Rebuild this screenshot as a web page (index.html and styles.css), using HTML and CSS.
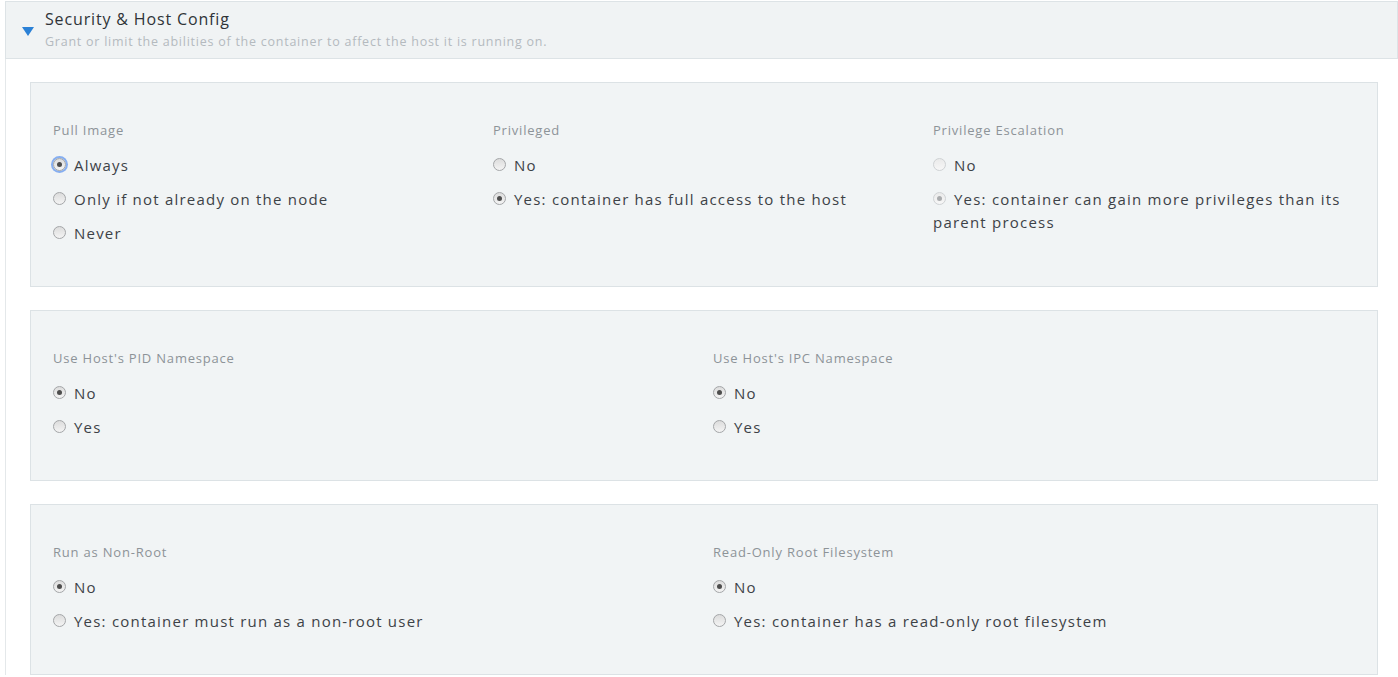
FILE: index.html
```html
<!DOCTYPE html>
<html lang="en">
<head>
<meta charset="utf-8">
<title>Security &amp; Host Config</title>
<link rel="stylesheet" href="styles.css">
</head>
<body>
<div class="accordion">
  <div class="acc-header">
    <span class="caret"></span>
    <div class="acc-titles">
      <div class="acc-title">Security &amp; Host Config</div>
      <div class="acc-sub">Grant or limit the abilities of the container to affect the host it is running on.</div>
    </div>
  </div>
  <div class="acc-body">
    <div class="panel cols-3">
      <div class="field">
        <div class="label">Pull Image</div>
        <div class="opt"><span class="radio checked focus"></span>Always</div>
        <div class="opt"><span class="radio"></span>Only if not already on the node</div>
        <div class="opt"><span class="radio"></span>Never</div>
      </div>
      <div class="field">
        <div class="label">Privileged</div>
        <div class="opt"><span class="radio"></span>No</div>
        <div class="opt"><span class="radio checked"></span>Yes: container has full access to the host</div>
      </div>
      <div class="field">
        <div class="label">Privilege Escalation</div>
        <div class="opt"><span class="radio disabled"></span>No</div>
        <div class="opt"><span class="radio checked disabled"></span>Yes: container can gain more privileges than its parent process</div>
      </div>
    </div>
    <div class="panel cols-2">
      <div class="field">
        <div class="label">Use Host's PID Namespace</div>
        <div class="opt"><span class="radio checked"></span>No</div>
        <div class="opt"><span class="radio"></span>Yes</div>
      </div>
      <div class="field">
        <div class="label">Use Host's IPC Namespace</div>
        <div class="opt"><span class="radio checked"></span>No</div>
        <div class="opt"><span class="radio"></span>Yes</div>
      </div>
    </div>
    <div class="panel cols-2">
      <div class="field">
        <div class="label">Run as Non-Root</div>
        <div class="opt"><span class="radio checked"></span>No</div>
        <div class="opt"><span class="radio"></span>Yes: container must run as a non-root user</div>
      </div>
      <div class="field">
        <div class="label">Read-Only Root Filesystem</div>
        <div class="opt"><span class="radio checked"></span>No</div>
        <div class="opt"><span class="radio"></span>Yes: container has a read-only root filesystem</div>
      </div>
    </div>
  </div>
</div>
</body>
</html>
```

FILE: styles.css
```css
html, body {
  margin: 0;
  padding: 0;
  background: #ffffff;
}
body {
  font-family: "Open Sans", "Liberation Sans", sans-serif;
  color: #3d4247;
}
.accordion {
  margin: 1px 0 0 5px;
  width: 1393px;
}
.acc-header {
  display: flex;
  align-items: flex-start;
  height: 56px;
  background: #f0f3f4;
  border: 1px solid #dde3e6;
}
.caret {
  width: 0;
  height: 0;
  margin: 25px 11px 0 16px;
  border-left: 6px solid transparent;
  border-right: 6px solid transparent;
  border-top: 9px solid #2b81d6;
}
.acc-titles {
  padding-top: 6px;
}
.acc-title {
  font-size: 16px;
  line-height: 22px;
  letter-spacing: 0.85px;
  color: #2f3338;
}
.acc-sub {
  margin-top: 3px;
  font-size: 12.5px;
  line-height: 18px;
  letter-spacing: 0.75px;
  color: #b4babf;
}
.acc-body {
  border-left: 1px solid #e4e8ea;
  padding: 23px 0 0 24px;
}
.panel {
  display: grid;
  box-sizing: content-box;
  padding: 37px 4px 30px 22px;
  width: 1320px;
  background: #f1f4f5;
  border: 1px solid #dce2e5;
  margin-bottom: 23px;
}
.cols-3 { grid-template-columns: repeat(3, 1fr); }
.cols-2 { grid-template-columns: repeat(2, 1fr); }
.field {
  padding-right: 20px;
}
.label {
  font-size: 13px;
  line-height: 20px;
  letter-spacing: 0.8px;
  color: #8d9398;
  margin-bottom: 14px;
}
.opt {
  font-size: 15px;
  line-height: 23px;
  letter-spacing: 1.22px;
  margin-bottom: 11px;
}
.radio {
  display: inline-block;
  box-sizing: border-box;
  width: 13px;
  height: 13px;
  margin-right: 8px;
  border-radius: 50%;
  border: 1px solid #a4a6a8;
  background: linear-gradient(#dcdcdc, #f4f4f4);
  vertical-align: 0;
  position: relative;
}
.radio.checked::after {
  content: "";
  position: absolute;
  left: 3px;
  top: 3px;
  width: 5px;
  height: 5px;
  border-radius: 50%;
  background: #4d4d4d;
}
.radio.disabled {
  border-color: #cfd2d4;
  background: linear-gradient(#eaeaea, #f7f7f7);
}
.radio.disabled.checked::after {
  background: #a9abad;
}
.radio.focus {
  box-shadow: 0 0 0 2px #86aef0;
}
```
